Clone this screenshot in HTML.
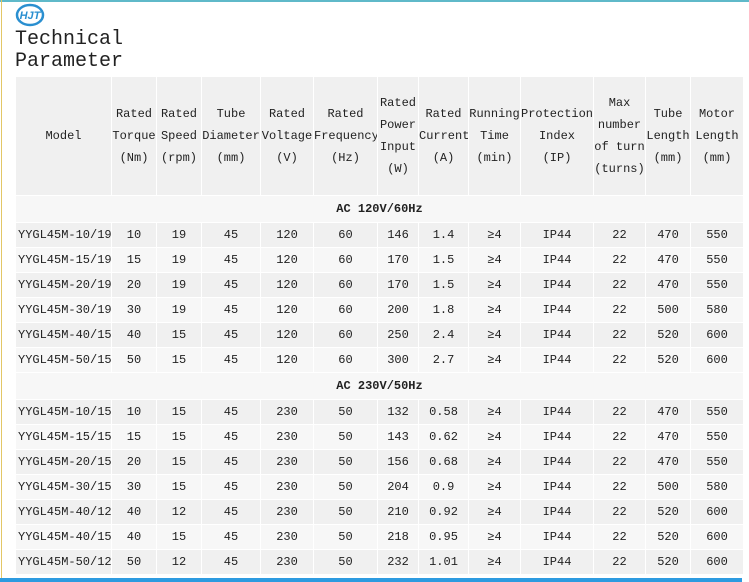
<!DOCTYPE html>
<html><head><meta charset="utf-8"><style>
body{margin:0;width:749px;height:582px;background:#fff;position:relative;overflow:hidden;font-family:"Liberation Mono","Noto Sans CJK SC",monospace;color:#222}
.top{position:absolute;left:0;top:0;width:749px;height:2px;background:#5fb9c9}
.left{position:absolute;left:1px;top:0;width:1px;height:582px;background:#e3c766}
.bot{position:absolute;left:0;top:578px;width:742px;height:4px;background:#2d9be0}
.title{position:absolute;left:15px;top:29px;font-size:20px;line-height:22px;color:#222;font-family:"Liberation Mono",monospace}
table{position:absolute;left:15px;top:76px;border-collapse:collapse;table-layout:fixed;width:728px;font-size:12px}
td{border:1.5px solid #fff;text-align:center;padding:0;background:#f0f0f0;line-height:22px;white-space:nowrap;overflow:hidden}
tr.h td{height:118px;line-height:22px}
tr.s td{height:26px;background:#f7f7f7;font-weight:bold;text-align:center}
tr.r td{height:24px}
tr.a td{background:#f7f7f7}
td.m{text-align:left;padding-left:2px}
</style></head><body>
<div class="top"></div><div class="left"></div>
<svg style="position:absolute;left:15px;top:3px" width="30" height="24" viewBox="0 0 30 24"><ellipse cx="15" cy="12" rx="13" ry="10" fill="none" stroke="#2a8fd0" stroke-width="2.5"/><text x="15" y="16" font-size="11" font-style="italic" font-weight="bold" fill="#2a8fd0" text-anchor="middle" font-family="Liberation Sans,sans-serif">HJT</text></svg>
<div class="title">Technical<br>Parameter</div>
<table>
<colgroup><col style="width:96px"><col style="width:45px"><col style="width:45px"><col style="width:59px"><col style="width:53px"><col style="width:64px"><col style="width:41px"><col style="width:50px"><col style="width:52px"><col style="width:73px"><col style="width:52px"><col style="width:45px"><col style="width:53px"></colgroup>
<tr class="h"><td>Model</td><td>Rated<br>Torque<br>(Nm)</td><td>Rated<br>Speed<br>(rpm)</td><td>Tube<br>Diameter<br>(mm)</td><td>Rated<br>Voltage<br>(V)</td><td>Rated<br>Frequency<br>(Hz)</td><td>Rated<br>Power<br>Input<br>(W)</td><td>Rated<br>Current<br>(A)</td><td>Running<br>Time<br>(min)</td><td>Protection<br>Index<br>(IP)</td><td>Max<br>number<br>of turn<br>(turns)</td><td>Tube<br>Length<br>(mm)</td><td>Motor<br>Length<br>(mm)</td></tr>
<tr class="s"><td colspan="13">AC 120V/60Hz</td></tr>
<tr class="r"><td class="m">YYGL45M-10/19</td><td>10</td><td>19</td><td>45</td><td>120</td><td>60</td><td>146</td><td>1.4</td><td>≥4</td><td>IP44</td><td>22</td><td>470</td><td>550</td></tr>
<tr class="r a"><td class="m">YYGL45M-15/19</td><td>15</td><td>19</td><td>45</td><td>120</td><td>60</td><td>170</td><td>1.5</td><td>≥4</td><td>IP44</td><td>22</td><td>470</td><td>550</td></tr>
<tr class="r"><td class="m">YYGL45M-20/19</td><td>20</td><td>19</td><td>45</td><td>120</td><td>60</td><td>170</td><td>1.5</td><td>≥4</td><td>IP44</td><td>22</td><td>470</td><td>550</td></tr>
<tr class="r a"><td class="m">YYGL45M-30/19</td><td>30</td><td>19</td><td>45</td><td>120</td><td>60</td><td>200</td><td>1.8</td><td>≥4</td><td>IP44</td><td>22</td><td>500</td><td>580</td></tr>
<tr class="r"><td class="m">YYGL45M-40/15</td><td>40</td><td>15</td><td>45</td><td>120</td><td>60</td><td>250</td><td>2.4</td><td>≥4</td><td>IP44</td><td>22</td><td>520</td><td>600</td></tr>
<tr class="r a"><td class="m">YYGL45M-50/15</td><td>50</td><td>15</td><td>45</td><td>120</td><td>60</td><td>300</td><td>2.7</td><td>≥4</td><td>IP44</td><td>22</td><td>520</td><td>600</td></tr>
<tr class="s"><td colspan="13">AC 230V/50Hz</td></tr>
<tr class="r"><td class="m">YYGL45M-10/15</td><td>10</td><td>15</td><td>45</td><td>230</td><td>50</td><td>132</td><td>0.58</td><td>≥4</td><td>IP44</td><td>22</td><td>470</td><td>550</td></tr>
<tr class="r a"><td class="m">YYGL45M-15/15</td><td>15</td><td>15</td><td>45</td><td>230</td><td>50</td><td>143</td><td>0.62</td><td>≥4</td><td>IP44</td><td>22</td><td>470</td><td>550</td></tr>
<tr class="r"><td class="m">YYGL45M-20/15</td><td>20</td><td>15</td><td>45</td><td>230</td><td>50</td><td>156</td><td>0.68</td><td>≥4</td><td>IP44</td><td>22</td><td>470</td><td>550</td></tr>
<tr class="r a"><td class="m">YYGL45M-30/15</td><td>30</td><td>15</td><td>45</td><td>230</td><td>50</td><td>204</td><td>0.9</td><td>≥4</td><td>IP44</td><td>22</td><td>500</td><td>580</td></tr>
<tr class="r"><td class="m">YYGL45M-40/12</td><td>40</td><td>12</td><td>45</td><td>230</td><td>50</td><td>210</td><td>0.92</td><td>≥4</td><td>IP44</td><td>22</td><td>520</td><td>600</td></tr>
<tr class="r a"><td class="m">YYGL45M-40/15</td><td>40</td><td>15</td><td>45</td><td>230</td><td>50</td><td>218</td><td>0.95</td><td>≥4</td><td>IP44</td><td>22</td><td>520</td><td>600</td></tr>
<tr class="r"><td class="m">YYGL45M-50/12</td><td>50</td><td>12</td><td>45</td><td>230</td><td>50</td><td>232</td><td>1.01</td><td>≥4</td><td>IP44</td><td>22</td><td>520</td><td>600</td></tr>
</table>
<div class="bot"></div>
</body></html>
